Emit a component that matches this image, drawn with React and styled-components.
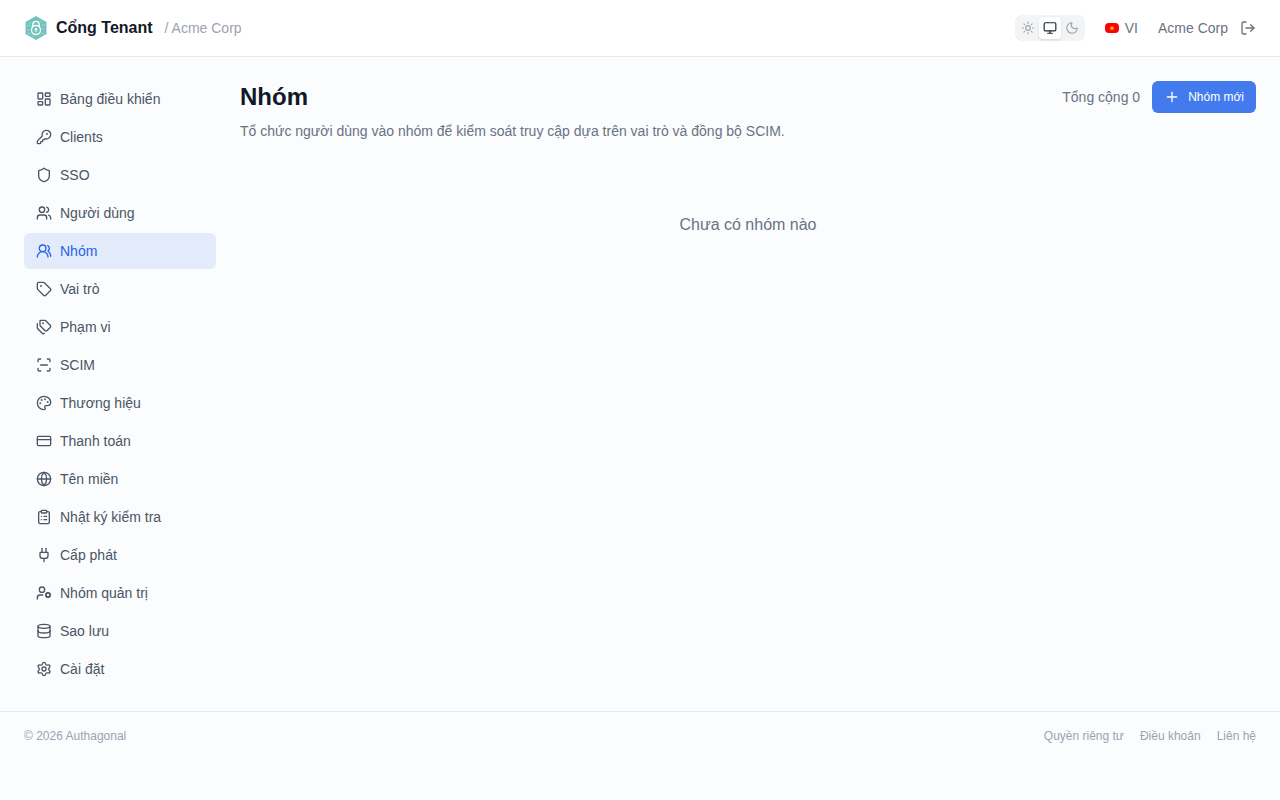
import React, { useState } from "react";
import styled, { createGlobalStyle } from "styled-components";
import {
  LayoutDashboard, KeyRound, Shield, Users, UsersRound, Tag, Tags, ScanLine,
  Palette, CreditCard, Globe, ClipboardList, Plug, UserCog, Database, Settings,
  Sun, Monitor, Moon, LogOut, Plus,
} from "lucide-react";

const GlobalStyle = createGlobalStyle`
  *, *::before, *::after { box-sizing: border-box; }
  body {
    margin: 0;
    background: #fafcfe;
    color: #111827;
    font-family: "Liberation Sans", Arial, sans-serif;
    font-size: 14px;
    line-height: 20px;
  }
  button { font-family: inherit; cursor: pointer; }
  a { color: inherit; text-decoration: none; }
`;

const Header = styled.header`
  display: flex;
  align-items: center;
  justify-content: space-between;
  height: 57px;
  padding: 0 24px;
  background: #fff;
  border-bottom: 1px solid #e5e7eb;
`;

const HeaderGroup = styled.div`
  display: flex;
  align-items: center;
  gap: ${(p) => p.$gap}px;
`;

const Brand = styled.a`
  display: flex;
  align-items: center;
  gap: 8px;
  font-size: 16px;
  line-height: 24px;
  font-weight: 700;
`;

const Crumb = styled.span`
  color: #9ca3af;
`;

const ThemeSwitch = styled.div`
  display: flex;
  padding: 2px;
  border-radius: 6px;
  background: #f3f4f6;
`;

const ThemeButton = styled.button`
  display: flex;
  padding: 4px;
  border: 0;
  border-radius: 4px;
  color: ${(p) => (p.$active ? "#1f2937" : "#9ca3af")};
  background: ${(p) => (p.$active ? "#fff" : "transparent")};
  box-shadow: ${(p) => (p.$active ? "0 1px 3px rgba(0, 0, 0, 0.12)" : "none")};
`;

const LanguageButton = styled.button`
  display: flex;
  align-items: center;
  gap: 6px;
  padding: 0;
  border: 0;
  background: none;
  color: #6b7280;
  font-size: 14px;
  line-height: 20px;
`;

const Account = styled.span`
  color: #6b7280;
`;

const IconButton = styled.button`
  display: flex;
  padding: 0;
  border: 0;
  background: none;
  color: #6b7280;
`;

const Body = styled.div`
  display: flex;
  gap: 24px;
  padding: 24px;
`;

const Nav = styled.nav`
  display: flex;
  flex: 0 0 192px;
  flex-direction: column;
  gap: 2px;
`;

const NavLink = styled.a`
  display: flex;
  align-items: center;
  gap: 8px;
  padding: 8px 12px;
  border-radius: 6px;
  color: ${(p) => (p.$active ? "#2563eb" : "#4b5563")};
  background: ${(p) => (p.$active ? "#e3eafa" : "transparent")};
`;

const Main = styled.main`
  flex: 1;
  min-width: 0;
`;

const TitleRow = styled.div`
  display: flex;
  align-items: center;
  justify-content: space-between;
`;

const Title = styled.h1`
  margin: 0;
  font-size: 24px;
  line-height: 32px;
  font-weight: 700;
`;

const Actions = styled.div`
  display: flex;
  align-items: center;
  gap: 12px;
`;

const Muted = styled.span`
  color: #6b7280;
`;

const PrimaryButton = styled.button`
  display: flex;
  align-items: center;
  gap: 8px;
  height: 32px;
  padding: 0 12px;
  border: 0;
  border-radius: 6px;
  background: #437aed;
  color: #fff;
  font-size: 12px;
  line-height: 16px;
`;

const Description = styled.p`
  margin: 8px 0 0;
  color: #6b7280;
`;

const Empty = styled.p`
  margin: 24px 0 0;
  padding: 48px 0;
  text-align: center;
  color: #6b7280;
  font-size: 16px;
  line-height: 24px;
`;

const Footer = styled.footer`
  display: flex;
  align-items: center;
  justify-content: space-between;
  padding: 16px 24px;
  border-top: 1px solid #e5e7eb;
  color: #9ca3af;
  font-size: 12px;
  line-height: 16px;
`;

const FooterLinks = styled.div`
  display: flex;
  gap: 16px;
`;

function Logo() {
  return (
    <svg width="24" height="24" viewBox="0 0 24 24" fill="none" aria-hidden="true">
      <path d="M12 0 22.5 6v12L12 24 1.5 18V6z" fill="#72c3bb" />
      <g stroke="#c3e5e1" strokeWidth=".8" strokeDasharray="1.2 .8">
        <path d="M3 9.500h3l1.500 1.500M3 14h3M4 17l3 1M5 6.500l2 1M18 9h3M17 17l3 1M18.500 13h2.500M8 20.500l2 .5M15.500 4.500l2 1" />
      </g>
      <path d="M8.800 11V8.600a3.200 3.200 0 0 1 6.400 0V11" stroke="#fff" strokeWidth="1.400" />
      <circle cx="12" cy="14" r="4.500" fill="#72c3bb" stroke="#fff" strokeWidth="1.300" />
      <circle cx="12" cy="13.200" r="1.200" fill="#fff" />
      <path d="M12 13.500v2.700" stroke="#fff" strokeWidth="1" />
    </svg>
  );
}

function VietnamFlag() {
  return (
    <svg width="14" height="10" viewBox="0 0 14 10" aria-hidden="true">
      <rect width="14" height="10" rx="4" fill="#f80606" />
      <path d="m7 2.500.7 1.700h1.900L8.100 5.400l.6 1.900L7 6.200 5.300 7.300l.6-1.900-1.500-1.200h1.900z" fill="#ffc400" />
    </svg>
  );
}

const navItems = [
  ["Bảng điều khiển", LayoutDashboard],
  ["Clients", KeyRound],
  ["SSO", Shield],
  ["Người dùng", Users],
  ["Nhóm", UsersRound],
  ["Vai trò", Tag],
  ["Phạm vi", Tags],
  ["SCIM", ScanLine],
  ["Thương hiệu", Palette],
  ["Thanh toán", CreditCard],
  ["Tên miền", Globe],
  ["Nhật ký kiểm tra", ClipboardList],
  ["Cấp phát", Plug],
  ["Nhóm quản trị", UserCog],
  ["Sao lưu", Database],
  ["Cài đặt", Settings],
];

const themes = [
  ["Sáng", Sun],
  ["Hệ thống", Monitor],
  ["Tối", Moon],
];

export default function App() {
  const [theme, setTheme] = useState("Hệ thống");
  return (
    <>
      <GlobalStyle />
      <Header>
        <HeaderGroup $gap={12}>
          <Brand href="#"><Logo />Cổng Tenant</Brand>
          <Crumb>/ Acme Corp</Crumb>
        </HeaderGroup>
        <HeaderGroup $gap={20}>
          <ThemeSwitch>
            {themes.map(([label, Icon]) => (
              <ThemeButton
                key={label}
                type="button"
                aria-label={label}
                aria-pressed={theme === label}
                $active={theme === label}
                onClick={() => setTheme(label)}
              >
                <Icon size={14} />
              </ThemeButton>
            ))}
          </ThemeSwitch>
          <LanguageButton type="button"><VietnamFlag />VI</LanguageButton>
          <HeaderGroup $gap={12}>
            <Account>Acme Corp</Account>
            <IconButton type="button" aria-label="Đăng xuất"><LogOut size={16} /></IconButton>
          </HeaderGroup>
        </HeaderGroup>
      </Header>
      <Body>
        <Nav>
          {navItems.map(([label, Icon]) => (
            <NavLink
              key={label}
              href="#"
              $active={label === "Nhóm"}
              aria-current={label === "Nhóm" ? "page" : undefined}
            >
              <Icon size={16} />
              {label}
            </NavLink>
          ))}
        </Nav>
        <Main>
          <TitleRow>
            <Title>Nhóm</Title>
            <Actions>
              <Muted>Tổng cộng 0</Muted>
              <PrimaryButton type="button"><Plus size={16} />Nhóm mới</PrimaryButton>
            </Actions>
          </TitleRow>
          <Description>
            Tổ chức người dùng vào nhóm để kiểm soát truy cập dựa trên vai trò và đồng bộ SCIM.
          </Description>
          <Empty>Chưa có nhóm nào</Empty>
        </Main>
      </Body>
      <Footer>
        <span>© 2026 Authagonal</span>
        <FooterLinks>
          <a href="#">Quyền riêng tư</a>
          <a href="#">Điều khoản</a>
          <a href="#">Liên hệ</a>
        </FooterLinks>
      </Footer>
    </>
  );
}
